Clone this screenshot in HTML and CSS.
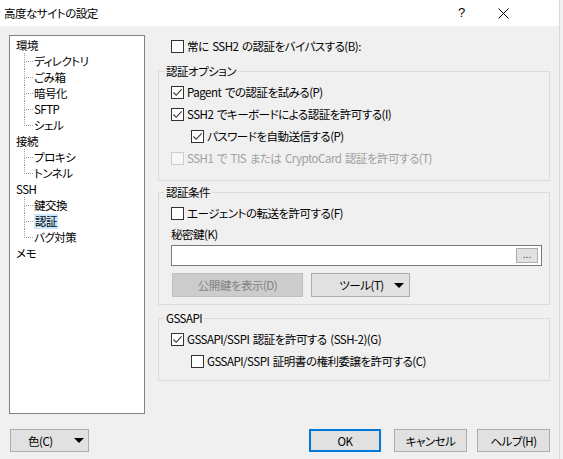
FILE: index.html
```html
<!DOCTYPE html>
<html lang="ja">
<head>
<meta charset="utf-8">
<title>高度なサイトの設定</title>
<link rel="stylesheet" href="styles.css">
</head>
<body>
<div class="window">
  <div class="titlebar">
    <span class="title">高度なサイトの設定</span>
    <span class="tb-help">?</span>
    <span class="tb-close"><svg width="11" height="11" viewBox="0 0 11 11"><path d="M0.5 0.5 L10.5 10.5 M10.5 0.5 L0.5 10.5" stroke="#000" stroke-width="1"/></svg></span>
  </div>
  <div class="main">
    <div class="tree">
      <div class="node">環境</div>
      <div class="child">ディレクトリ</div>
      <div class="child">ごみ箱</div>
      <div class="child">暗号化</div>
      <div class="child">SFTP</div>
      <div class="child last">シェル</div>
      <div class="node">接続</div>
      <div class="child">プロキシ</div>
      <div class="child last">トンネル</div>
      <div class="node">SSH</div>
      <div class="child">鍵交換</div>
      <div class="child"><span class="sel">認証</span></div>
      <div class="child last">バグ対策</div>
      <div class="node">メモ</div>
    </div>
    <div class="panel">
      <div class="row top-row"><span class="cb"></span><span>常に SSH2 の認証をバイパスする(B):</span></div>
      <fieldset class="group g1">
        <legend>認証オプション</legend>
        <div class="row"><span class="cb checked"><svg viewBox="0 0 11 11" width="11" height="11"><path d="M1.5 5.5 L4.2 8.3 L9.6 2.4" fill="none" stroke="#333" stroke-width="1.1"/></svg></span><span>Pagent での認証を試みる(P)</span></div>
        <div class="row"><span class="cb checked"><svg viewBox="0 0 11 11" width="11" height="11"><path d="M1.5 5.5 L4.2 8.3 L9.6 2.4" fill="none" stroke="#333" stroke-width="1.1"/></svg></span><span>SSH2 でキーボードによる認証を許可する(I)</span></div>
        <div class="row indent"><span class="cb checked"><svg viewBox="0 0 11 11" width="11" height="11"><path d="M1.5 5.5 L4.2 8.3 L9.6 2.4" fill="none" stroke="#333" stroke-width="1.1"/></svg></span><span>パスワードを自動送信する(P)</span></div>
        <div class="row disabled"><span class="cb"></span><span>SSH1 で TIS または CryptoCard 認証を許可する(T)</span></div>
      </fieldset>
      <fieldset class="group g2">
        <legend>認証条件</legend>
        <div class="row"><span class="cb"></span><span>エージェントの転送を許可する(F)</span></div>
        <div class="label-row">秘密鍵(K)</div>
        <div class="input"><span class="browse">...</span></div>
        <div class="btn-row">
          <span class="btn btn-disabled">公開鍵を表示(D)</span>
          <span class="btn btn-drop"><span class="btn-text">ツール(T)</span><span class="arrow"></span></span>
        </div>
      </fieldset>
      <fieldset class="group g3">
        <legend>GSSAPI</legend>
        <div class="row"><span class="cb checked"><svg viewBox="0 0 11 11" width="11" height="11"><path d="M1.5 5.5 L4.2 8.3 L9.6 2.4" fill="none" stroke="#333" stroke-width="1.1"/></svg></span><span>GSSAPI/SSPI 認証を許可する (SSH-2)(G)</span></div>
        <div class="row indent"><span class="cb"></span><span>GSSAPI/SSPI 証明書の権利委譲を許可する(C)</span></div>
      </fieldset>
    </div>
  </div>
  <div class="footer">
    <span class="btn btn-color"><span class="btn-text">色(C)</span><span class="arrow"></span></span>
    <span class="spacer"></span>
    <span class="btn btn-ok">OK</span>
    <span class="btn btn-cancel">キャンセル</span>
    <span class="btn btn-helpb">ヘルプ(H)</span>
  </div>
</div>
</body>
</html>
```
FILE: styles.css
```css
html, body {
  margin: 0;
  padding: 0;
}
body {
  width: 563px;
  height: 459px;
  overflow: hidden;
  background: #f0f0f0;
  font-family: "Noto Sans CJK JP", "Noto Sans", sans-serif;
  font-size: 11.5px;
  letter-spacing: -0.5px;
  word-spacing: 1.5px;
  font-feature-settings: "palt";
  color: #000;
}
.window {
  width: 560px;
  height: 459px;
  background: #f0f0f0;
  border-right: 1px solid #d8d8d8;
  box-sizing: border-box;
}
.titlebar {
  height: 26px;
  background: #fff;
  display: flex;
  align-items: center;
}
.title {
  padding-left: 4px;
  flex: 1;
  line-height: 16px;
  font-size: 11.5px;
}
.tb-help {
  width: 20px;
  margin-right: 20px;
  line-height: 16px;
  font-family: "Liberation Sans", sans-serif;
  font-size: 13px;
  letter-spacing: 0;
}
.tb-close {
  width: 11px;
  height: 11px;
  margin-right: 50px;
  display: flex;
}
.main {
  display: flex;
  padding: 9px 0 0 9px;
}
.tree {
  width: 136px;
  height: 379px;
  box-sizing: border-box;
  border: 1px solid #828282;
  background: #fff;
  padding-top: 1px;
}
.node {
  height: 16px;
  line-height: 16px;
  padding-left: 6px;
}
.child {
  position: relative;
  height: 16px;
  line-height: 16px;
  margin-left: 14px;
  padding-left: 10px;
}
.child::before {
  content: "";
  position: absolute;
  left: 0;
  top: 0;
  width: 8px;
  height: 8px;
  border-left: 1px dotted #a0a0a0;
  border-bottom: 1px dotted #a0a0a0;
}
.child::after {
  content: "";
  position: absolute;
  left: 0;
  top: 9px;
  bottom: 0;
  border-left: 1px dotted #a0a0a0;
}
.child.last::after {
  display: none;
}
.sel {
  background: #cce8ff;
  padding: 0 1px;
  display: inline-block;
  line-height: 15px;
}
.panel {
  margin-left: 13px;
  width: 392px;
}
.row {
  height: 22px;
  display: flex;
  align-items: center;
  padding-left: 12px;
}
.top-row {
  padding-left: 13px;
}
.row.indent {
  padding-left: 32px;
}
.cb {
  width: 13px;
  height: 13px;
  box-sizing: border-box;
  border: 1px solid #333;
  background: #fff;
  margin-right: 3px;
  flex: none;
  display: flex;
  align-items: center;
  justify-content: center;
}
.disabled {
  color: #a0a0a0;
}
.disabled .cb {
  border-color: #cccccc;
  background: #f7f7f7;
}
.group {
  margin: 0;
  padding: 0;
  border: 1px solid #dcdcdc;
  min-width: 0;
}
.group legend {
  padding: 0 2px;
  margin-left: 5px;
  line-height: 14px;
}
.g1 {
  margin-top: 7px;
  padding-top: 3px;
  padding-bottom: 11px;
}
.g2 {
  margin-top: 4px;
  padding-top: 3px;
  padding-bottom: 7px;
}
.g3 {
  margin-top: 6px;
  padding-top: 3px;
  padding-bottom: 8px;
}
.label-row {
  height: 20px;
  line-height: 20px;
  padding-left: 12px;
}
.input {
  margin: 1px 7px 0 12px;
  height: 21px;
  box-sizing: border-box;
  border: 1px solid #7a7a7a;
  background: #fff;
  display: flex;
  justify-content: flex-end;
  align-items: center;
  padding-right: 3px;
}
.browse {
  width: 22px;
  height: 15px;
  box-sizing: border-box;
  background: #e1e1e1;
  border: 1px solid #adadad;
  font-size: 10px;
  line-height: 11px;
  text-align: center;
  font-family: "Liberation Sans", sans-serif;
  letter-spacing: 0;
  color: #333;
}
.btn-row {
  display: flex;
  gap: 8px;
  margin-top: 7px;
  padding-left: 13px;
}
.btn {
  height: 23px;
  box-sizing: border-box;
  border: 1px solid #adadad;
  background: #e1e1e1;
  display: flex;
  align-items: center;
  justify-content: center;
  line-height: 16px;
}
.btn-disabled {
  width: 131px;
  height: 24px;
  background: #cccccc;
  border-color: #bfbfbf;
  color: #838383;
}
.btn-drop {
  width: 99px;
  height: 24px;
  justify-content: flex-start;
  padding-left: 17px;
  padding-right: 5px;
}
.btn-drop .btn-text {
  flex: 1;
  text-align: center;
}
.arrow {
  width: 0;
  height: 0;
  border-left: 5px solid transparent;
  border-right: 5px solid transparent;
  border-top: 5px solid #000;
}
.footer {
  display: flex;
  align-items: center;
  padding: 15px 0 0 10px;
}
.spacer {
  flex: 1;
}
.btn-color {
  width: 79px;
  height: 23px;
  justify-content: flex-start;
  padding-left: 17px;
  padding-right: 4px;
}
.btn-color .btn-text {
  flex: 1;
}
.btn-ok {
  width: 72px;
  border: 2px solid #0078d7;
}
.btn-cancel {
  width: 73px;
  margin-left: 13px;
}
.btn-helpb {
  width: 73px;
  margin-left: 10px;
  margin-right: 9px;
}
```
